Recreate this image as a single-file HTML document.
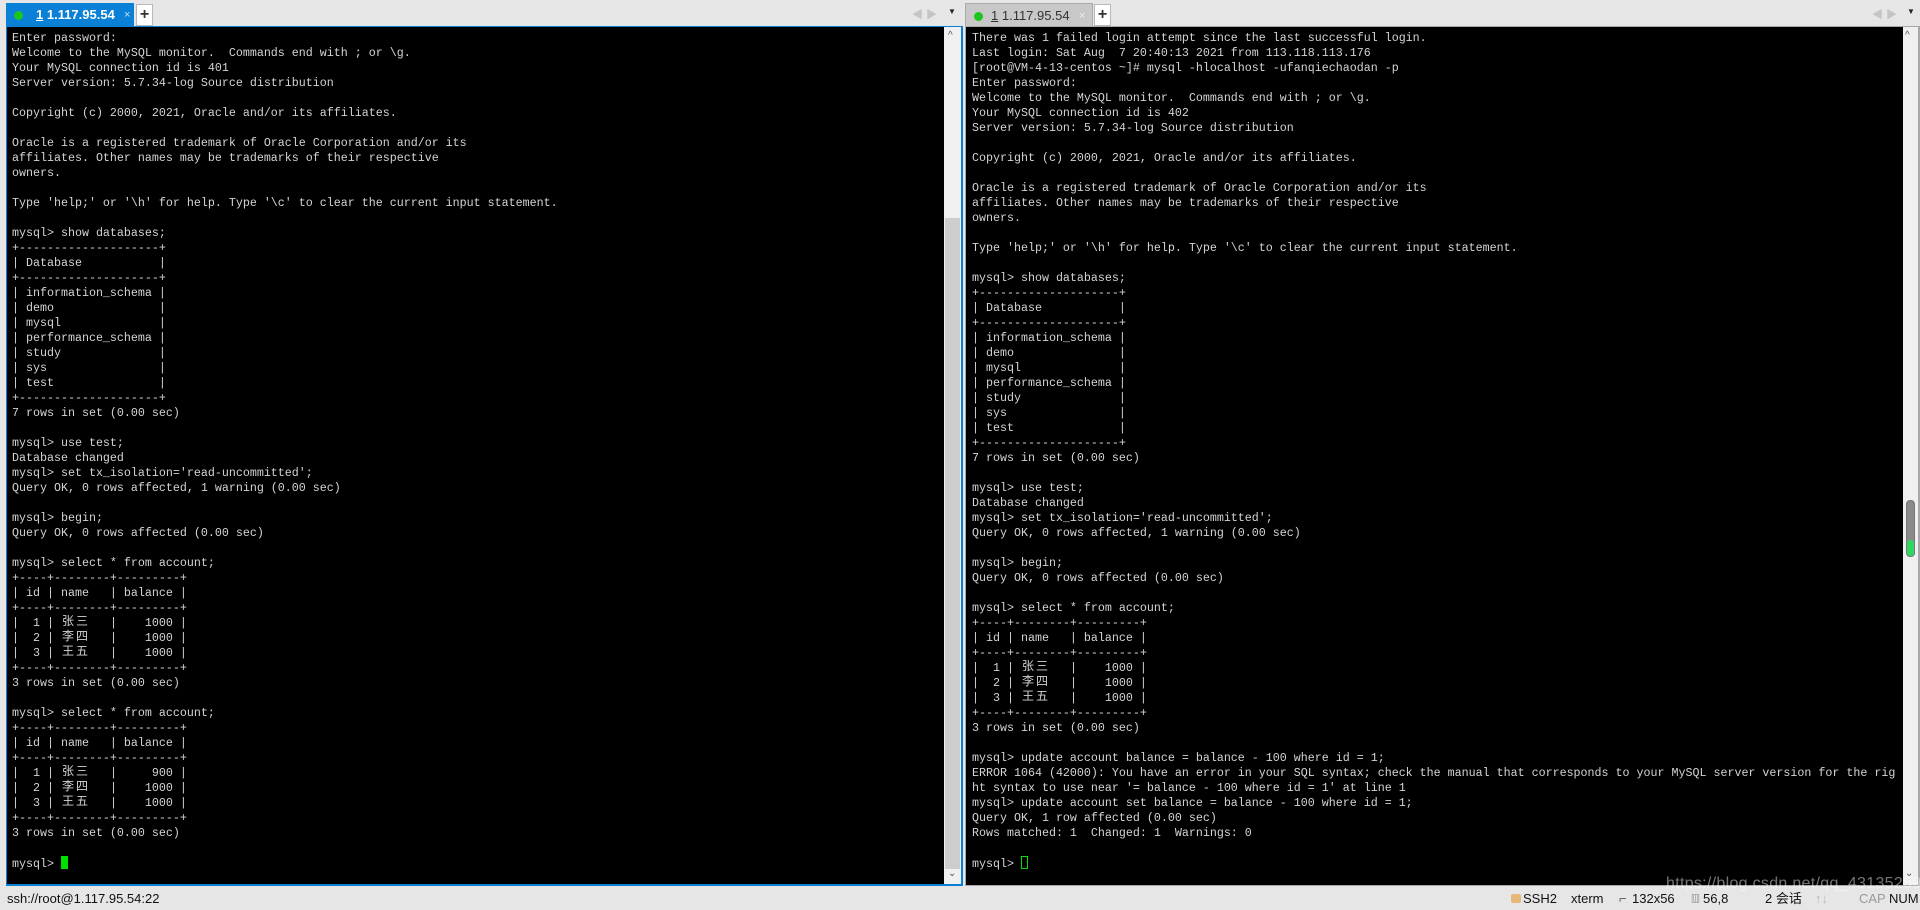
<!DOCTYPE html>
<html><head><meta charset="utf-8"><style>
*{margin:0;padding:0;box-sizing:border-box}
body{width:1920px;height:910px;background:#e6e6e6;position:relative;overflow:hidden;font-family:"Liberation Sans","Noto Sans CJK SC",sans-serif}
.abs{position:absolute}
.term{position:absolute;background:#000}
pre{position:absolute;font-family:"Liberation Mono","Noto Sans CJK SC",monospace;font-size:11.67px;line-height:15px;color:#d4d4d4;white-space:pre}
.c{display:inline-block;width:14px;height:15px;text-align:center;font-family:"Noto Sans CJK SC",sans-serif;font-size:12px;line-height:15px;vertical-align:top;position:relative;top:-3px}
.tab{position:absolute;top:3px;height:24px;font-size:13px;font-weight:bold;line-height:24px}
.dot{position:absolute;left:8px;top:8px;width:9px;height:9px;border-radius:50%;background:#1cc51c}
.plus{position:absolute;top:4px;width:17px;height:22px;background:#fff;border:1px solid #b8b8b8;font-size:16px;font-weight:bold;text-align:center;line-height:19px;color:#333}
.sb{position:absolute;background:#f0f0f0}
.st{position:absolute;top:891px;font-size:13px;color:#111;line-height:16px}
</style></head><body>
<!-- left pane -->
<div class="abs" style="left:6px;top:26px;width:957px;height:860px;background:#0a7fd4"></div>
<div class="term" style="left:7px;top:27px;width:937px;height:857px"></div>
<div class="sb" style="left:944px;top:27px;width:17px;height:857px"></div>
<div class="abs" style="left:945px;top:218px;width:15px;height:651px;background:#cdcdcd"></div>
<div class="abs" style="left:948px;top:30px;font-size:10px;color:#555">^</div>
<div class="abs" style="left:948px;top:868px;font-size:10px;color:#555">&#8964;</div>
<div class="tab" style="left:6px;width:128px;background:#0a80d6;color:#fff"><div class="dot"></div><span style="position:absolute;left:30px"><u>1</u> 1.117.95.54</span><span style="position:absolute;left:118px;font-weight:normal;font-size:11px;color:#cde">×</span></div>
<div class="plus" style="left:136px">+</div>
<div class="abs" style="left:912px;top:6px;color:#c4c4c4;font-size:11px">◀ ▶</div>
<div class="abs" style="left:948px;top:7px;font-size:8px;color:#222">▼</div>
<pre style="left:12px;top:31px">Enter password:
Welcome to the MySQL monitor.  Commands end with ; or \g.
Your MySQL connection id is 401
Server version: 5.7.34-log Source distribution

Copyright (c) 2000, 2021, Oracle and/or its affiliates.

Oracle is a registered trademark of Oracle Corporation and/or its
affiliates. Other names may be trademarks of their respective
owners.

Type 'help;' or '\h' for help. Type '\c' to clear the current input statement.

mysql> show databases;
+--------------------+
| Database           |
+--------------------+
| information_schema |
| demo               |
| mysql              |
| performance_schema |
| study              |
| sys                |
| test               |
+--------------------+
7 rows in set (0.00 sec)

mysql> use test;
Database changed
mysql> set tx_isolation='read-uncommitted';
Query OK, 0 rows affected, 1 warning (0.00 sec)

mysql> begin;
Query OK, 0 rows affected (0.00 sec)

mysql> select * from account;
+----+--------+---------+
| id | name   | balance |
+----+--------+---------+
|  1 | <span class="c">张</span><span class="c">三</span>   |    1000 |
|  2 | <span class="c">李</span><span class="c">四</span>   |    1000 |
|  3 | <span class="c">王</span><span class="c">五</span>   |    1000 |
+----+--------+---------+
3 rows in set (0.00 sec)

mysql> select * from account;
+----+--------+---------+
| id | name   | balance |
+----+--------+---------+
|  1 | <span class="c">张</span><span class="c">三</span>   |     900 |
|  2 | <span class="c">李</span><span class="c">四</span>   |    1000 |
|  3 | <span class="c">王</span><span class="c">五</span>   |    1000 |
+----+--------+---------+
3 rows in set (0.00 sec)

mysql> <span style="display:inline-block;width:7px;height:13px;background:#00e000;vertical-align:-2px"></span></pre>
<!-- right pane -->
<div class="abs" style="left:965px;top:26px;width:955px;height:860px;background:#a8a8a8"></div>
<div class="term" style="left:966px;top:27px;width:937px;height:858px"></div>
<div class="sb" style="left:1903px;top:27px;width:15px;height:858px"></div>
<div class="abs" style="left:1906px;top:500px;width:9px;height:57px;border-radius:4px;background:#8a8a8a;border:1px solid #777"></div>
<div class="abs" style="left:1907px;top:540px;width:7px;height:16px;border-radius:3px;background:#2fd860"></div>
<div class="abs" style="left:1905px;top:30px;font-size:10px;color:#555">^</div>
<div class="abs" style="left:1905px;top:868px;font-size:10px;color:#555">&#8964;</div>
<div class="tab" style="left:965px;width:128px;background:#c8c8c8;color:#333;font-weight:normal;border:1px solid #aaa"><div class="dot"></div><span style="position:absolute;left:25px"><u>1</u> 1.117.95.54</span><span style="position:absolute;left:113px;font-size:11px;color:#eee">×</span></div>
<div class="plus" style="left:1094px">+</div>
<div class="abs" style="left:1872px;top:6px;color:#c4c4c4;font-size:11px">◀ ▶</div>
<div class="abs" style="left:1907px;top:7px;font-size:8px;color:#222">▼</div>
<pre style="left:972px;top:31px">There was 1 failed login attempt since the last successful login.
Last login: Sat Aug  7 20:40:13 2021 from 113.118.113.176
[root@VM-4-13-centos ~]# mysql -hlocalhost -ufanqiechaodan -p
Enter password:
Welcome to the MySQL monitor.  Commands end with ; or \g.
Your MySQL connection id is 402
Server version: 5.7.34-log Source distribution

Copyright (c) 2000, 2021, Oracle and/or its affiliates.

Oracle is a registered trademark of Oracle Corporation and/or its
affiliates. Other names may be trademarks of their respective
owners.

Type 'help;' or '\h' for help. Type '\c' to clear the current input statement.

mysql> show databases;
+--------------------+
| Database           |
+--------------------+
| information_schema |
| demo               |
| mysql              |
| performance_schema |
| study              |
| sys                |
| test               |
+--------------------+
7 rows in set (0.00 sec)

mysql> use test;
Database changed
mysql> set tx_isolation='read-uncommitted';
Query OK, 0 rows affected, 1 warning (0.00 sec)

mysql> begin;
Query OK, 0 rows affected (0.00 sec)

mysql> select * from account;
+----+--------+---------+
| id | name   | balance |
+----+--------+---------+
|  1 | <span class="c">张</span><span class="c">三</span>   |    1000 |
|  2 | <span class="c">李</span><span class="c">四</span>   |    1000 |
|  3 | <span class="c">王</span><span class="c">五</span>   |    1000 |
+----+--------+---------+
3 rows in set (0.00 sec)

mysql> update account balance = balance - 100 where id = 1;
ERROR 1064 (42000): You have an error in your SQL syntax; check the manual that corresponds to your MySQL server version for the rig
ht syntax to use near '= balance - 100 where id = 1' at line 1
mysql> update account set balance = balance - 100 where id = 1;
Query OK, 1 row affected (0.00 sec)
Rows matched: 1  Changed: 1  Warnings: 0

mysql> <span style="display:inline-block;width:7px;height:13px;border:1px solid #00e000;vertical-align:-2px"></span></pre>
<!-- status bar -->
<div class="st" style="left:7px">ssh://root@1.117.95.54:22</div>
<div class="abs" style="left:1511px;top:894px;width:10px;height:9px;background:#e8b878;border-radius:2px"></div>
<div class="st" style="left:1523px">SSH2</div>
<div class="st" style="left:1571px">xterm</div>
<div class="st" style="left:1619px;color:#555">⌐</div>
<div class="st" style="left:1632px">132x56</div>
<div class="st" style="left:1691px;color:#555;font-size:9px">▥</div>
<div class="st" style="left:1703px">56,8</div>
<div class="st" style="left:1765px">2 会话</div>
<div class="st" style="left:1815px;color:#bbb">↑↓</div>
<div class="st" style="left:1859px;color:#999">CAP</div>
<div class="st" style="left:1889px">NUM</div>
<div class="abs" style="left:1666px;top:875px;font-size:16px;color:rgba(255,255,255,0.45);letter-spacing:0.3px">https://blog.csdn.net/qq_43135259</div>
</body></html>
